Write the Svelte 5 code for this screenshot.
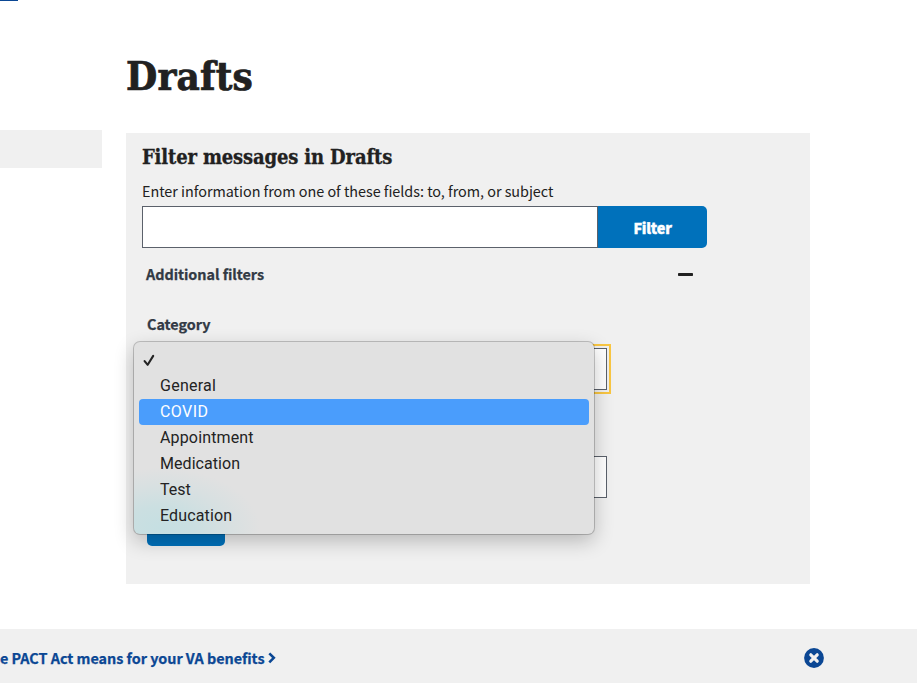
<script>
  const options = ['', 'General', 'COVID', 'Appointment', 'Medication', 'Test', 'Education'];
  const spacing = { General: 0.25, COVID: 0.4, Appointment: 0.15, Medication: 0.06, Test: 0, Education: 0.15 };
  let selected = $state('');
  let active = $state('COVID');
</script>

<div class="page">
  <div class="topline"></div>
  <div class="columns">
    <aside><div class="side-item"></div></aside>
    <main>
      <h1>Drafts</h1>
      <section class="panel">
        <h2>Filter messages in Drafts</h2>
        <label class="hint" for="q">Enter information from one of these fields: to, from, or subject</label>
        <div class="search">
          <input id="q" type="text" />
          <button class="primary">Filter</button>
        </div>
        <div class="accordion">
          <span class="acc-title">Additional filters</span>
          <svg width="15" height="3" viewBox="0 0 15 3"><rect width="15" height="3" rx="0.7" fill="#212121" /></svg>
        </div>
        <div class="fields">
          <div class="label">Category</div>
          <div class="select-wrap">
            <div class="select focused"></div>
            <div class="menu">
              {#each options as option}
                <div class="option" class:active={option === active}>
                  <span class="mark">
                    {#if option === selected}
                      <svg width="12" height="13" viewBox="0 0 12 13"><path d="M1.6 7.1 4.7 10.8 10.2 1.9" fill="none" stroke="#232323" stroke-width="2.1" stroke-linecap="round" stroke-linejoin="round" /></svg>
                    {/if}
                  </span>
                  <span class="text" style:letter-spacing="{spacing[option] ?? 0}px">{option}</span>
                </div>
              {/each}
            </div>
          </div>
          <div class="select second"></div>
          <button class="apply" aria-label="Filter"></button>
        </div>
      </section>
    </main>
  </div>
  <footer>
    <a href="#pact"><span>e PACT Act means for your VA benefits</span>
      <svg width="8" height="12" viewBox="0 0 8 12"><path d="M1.3 1.3 5.8 5.8 1.3 10.3" fill="none" stroke="#0b4794" stroke-width="2.6" /></svg>
    </a>
    <svg class="close" width="20" height="20" viewBox="0 0 20 20"><circle cx="10" cy="10" r="9.9" fill="#0b4794" /><path d="M6.8 6.8 13.2 13.2M13.2 6.8 6.8 13.2" stroke="#f0f0f0" stroke-width="3.2" stroke-linecap="round" /></svg>
  </footer>
</div>

<style>
  :global(body) { margin: 0; background: #fff; }
  .page {
    width: 917px; height: 683px; overflow: hidden; display: flex; flex-direction: column;
    box-sizing: border-box; color: #212121;
    font-family: "Noto Sans CJK JP", "Noto Sans", sans-serif; font-size: 14.4px;
  }
  .page * { box-sizing: border-box; }
  .topline { width: 18px; height: 1px; flex: none; background: #0b4794; }
  .columns { display: flex; gap: 24px; height: 628px; flex: none; }
  aside { width: 102px; padding-top: 129px; }
  .side-item { height: 38px; background: #f0f0f0; }
  main { width: 684px; display: flex; flex-direction: column; }
  h1, h2 { margin: 0; font-family: "DejaVu Serif Condensed", "DejaVu Serif", serif; font-stretch: condensed; font-weight: 700; white-space: nowrap; }
  h1 { height: 132px; padding-top: 50px; font-size: 40px; line-height: 50px; letter-spacing: 0.2px; -webkit-text-stroke: 0.7px #212121; }
  .panel { height: 451px; padding: 10px 16px; background: #f0f0f0; display: flex; flex-direction: column; }
  h2 { height: 28px; font-size: 20px; line-height: 28px; letter-spacing: -0.15px; -webkit-text-stroke: 0.3px #212121; }
  .hint { display: block; height: 35px; padding-top: 10px; line-height: 20px; white-space: nowrap; letter-spacing: -0.03px; }
  .search { display: flex; width: 565px; height: 42px; }
  input { width: 456px; height: 42px; margin: 0; padding: 0 8px; border: 1px solid #5b616b; border-radius: 0; background: #fff; }
  button { border: 0; padding: 0; font-family: inherit; color: #fff; background: #0071bb; }
  .primary { flex: 1; border-radius: 0 5px 5px 0; font-size: 14.4px; font-weight: 900; line-height: 20px; letter-spacing: -0.2px; -webkit-text-stroke: 0.4px #fff; padding-top: 1px; }
  .accordion { width: 551px; height: 52px; padding: 0 0 0 4px; display: flex; justify-content: space-between; align-items: center; }
  .acc-title, .label { font-weight: 700; color: #323a45; line-height: 20px; letter-spacing: -0.04px; -webkit-text-stroke: 0.25px #323a45; }
  .fields { width: 465px; padding: 14px 0 0 5px; display: flex; flex-direction: column; }
  .label { height: 34px; }
  .select-wrap { position: relative; }
  .select { height: 42px; border: 1px solid #5b616b; background: #fff; }
  .focused { outline: 2px solid #f9c642; outline-offset: 2px; }
  .second { margin-top: 66px; }
  .apply { width: 78px; height: 40px; margin-top: 8px; border-radius: 5px; }
  .menu {
    position: absolute; left: -13px; top: -6px; width: 460px; height: 192px; padding: 5px; border-radius: 6px;
    background: radial-gradient(ellipse 100px 60px at 26px 186px, #c5dfe2 0%, #cbdfe1 35%, #d8e0e1 70%, #e1e1e1 100%), #e1e1e1;
    box-shadow: 0 0 0 1px rgba(0, 0, 0, 0.2), 0 7px 20px rgba(0, 0, 0, 0.24);
    font-family: Roboto, "Liberation Sans", sans-serif; font-size: 16px; color: #232323;
  }
  .option { display: flex; align-items: center; height: 26px; border-radius: 4px; }
  .option.active { background: #4a9dfc; color: #fff; }
  .mark { width: 21px; padding-left: 4px; display: flex; }
  .text { line-height: 26px; white-space: nowrap; }
  footer { height: 54px; flex: none; background: #f0f0f0; display: flex; justify-content: space-between; align-items: center; padding: 4px 93px 0 0; }
  a { display: flex; align-items: center; gap: 3px; color: #0b4794; text-decoration: none; font-weight: 700; line-height: 20px; white-space: nowrap; letter-spacing: -0.03px; -webkit-text-stroke: 0.25px #0b4794; }
</style>
